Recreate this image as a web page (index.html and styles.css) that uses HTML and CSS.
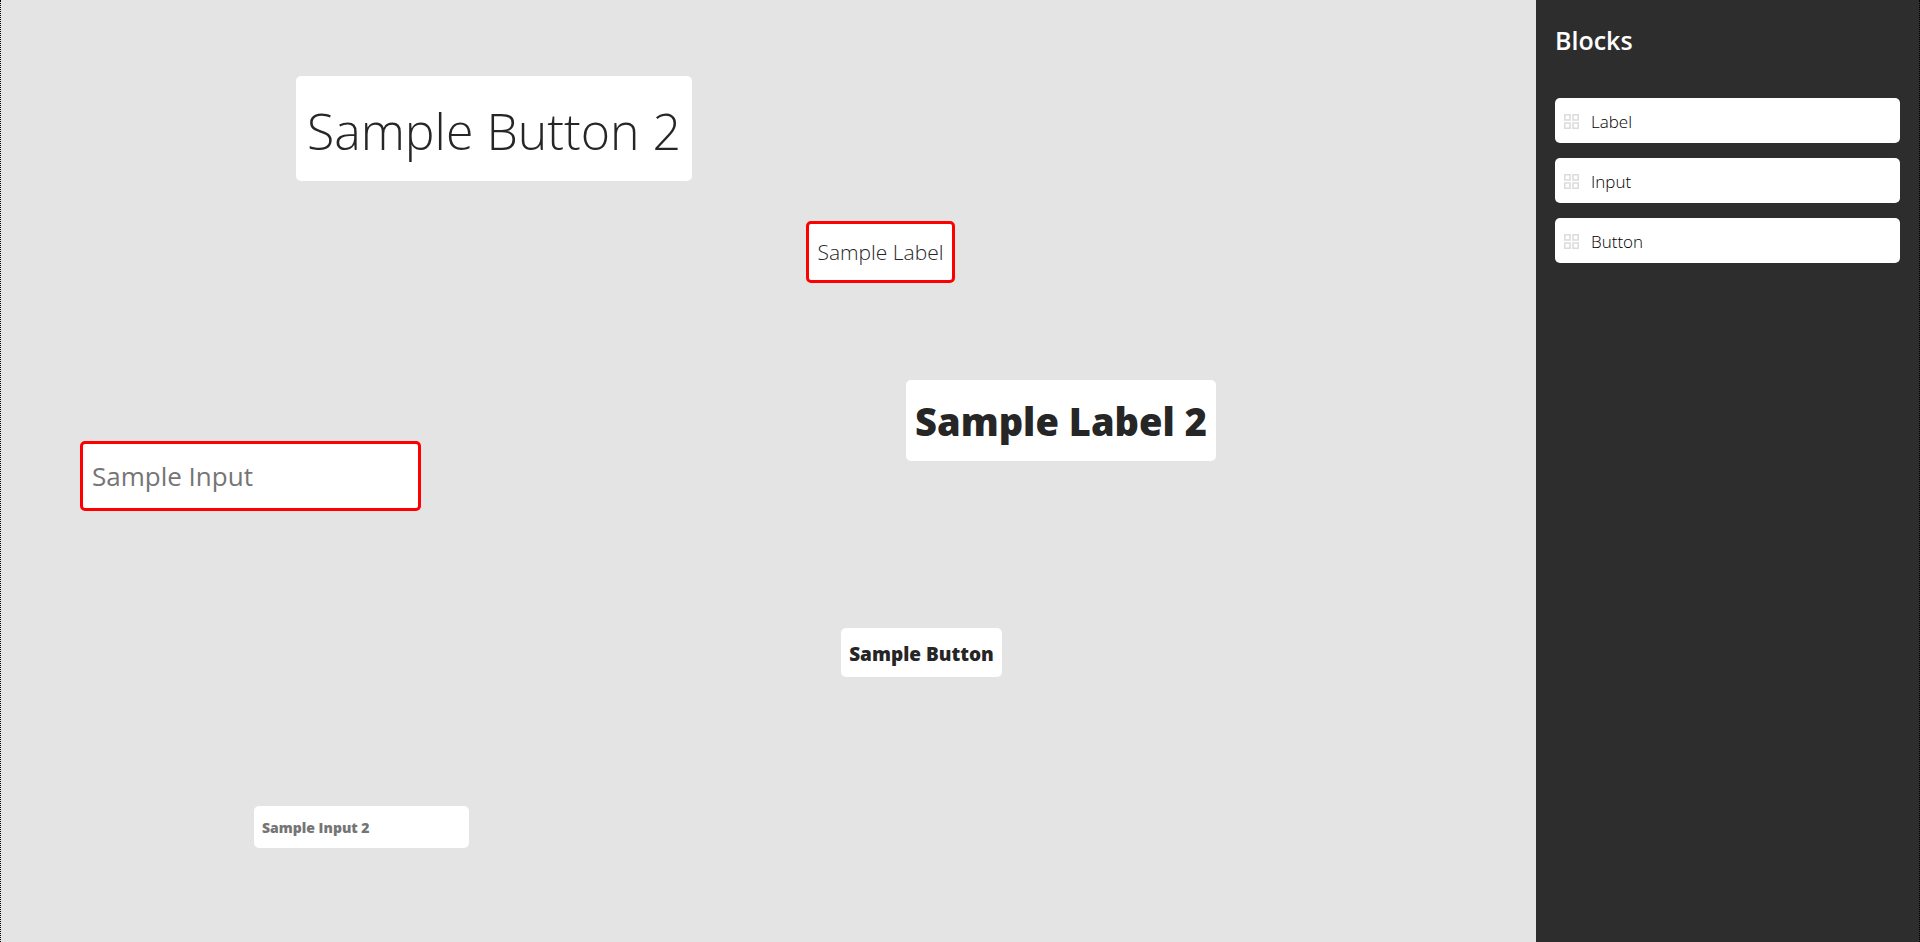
FILE: index.html
```html
<!DOCTYPE html>
<html lang="en">
<head>
<meta charset="utf-8">
<title>Blocks</title>
<link rel="stylesheet" href="styles.css">
</head>
<body>
<svg class="sprite" aria-hidden="true">
  <symbol id="grip" viewBox="0 0 15 15">
    <path fill="none" stroke="currentColor" stroke-width="1.6" d="M.8.8h5.2v5.2H.8zM9 .8h5.2v5.2H9zM.8 9h5.2v5.2H.8zM9 9h5.2v5.2H9z"/>
  </symbol>
</svg>
<div class="app">
  <main class="canvas">
    <button class="node button-two" type="button">Sample Button 2</button>
    <label class="node label-one selected" for="input-one">Sample Label</label>
    <label class="node label-two" for="input-two">Sample Label 2</label>
    <input class="node input-one selected" id="input-one" type="text" placeholder="Sample Input">
    <button class="node button-one" type="button">Sample Button</button>
    <input class="node input-two" id="input-two" type="text" placeholder="Sample Input 2">
  </main>
  <aside class="sidebar">
    <h1 class="title">Blocks</h1>
    <div class="blocks">
      <button class="block" type="button"><svg class="grip" aria-hidden="true"><use href="#grip"/></svg>Label</button>
      <button class="block" type="button"><svg class="grip" aria-hidden="true"><use href="#grip"/></svg>Input</button>
      <button class="block" type="button"><svg class="grip" aria-hidden="true"><use href="#grip"/></svg>Button</button>
    </div>
  </aside>
</div>
</body>
</html>
```
FILE: styles.css
```css
* { box-sizing: border-box; }
body { margin: 0; font-family: "Open Sans", "Noto Sans", sans-serif; color: #262626; }
button, input { font-family: inherit; color: inherit; }
.sprite { position: absolute; width: 0; height: 0; }
.app {
  display: grid;
  grid-template-columns: 4fr 1fr;
  min-height: 100vh;
}
.canvas { position: relative; background: #e4e4e4; border-left: 1px dotted #000; }

/* Blocks placed freely on the canvas */
.node {
  position: absolute;
  display: flex;
  align-items: center;
  justify-content: center;
  padding: 0 8px;
  border: 0;
  border-radius: 5px;
  background: #fff;
  white-space: nowrap;
}
.selected { border: 3px solid #f00; }
.node::placeholder { color: #757575; opacity: 1; }
.button-two { left: 295px; top: 76px; min-width: 396px; height: 105px; padding-top: 4px; font-size: 50px; font-weight: 300; }
.label-one { left: 805px; top: 221px; min-width: 149px; height: 62px; font-size: 21px; font-weight: 300; }
.label-two { left: 905px; top: 380px; min-width: 310px; height: 81px; font-size: 38px; font-weight: 800; }
.input-one { left: 79px; top: 441px; width: 341px; height: 70px; padding: 0 9px; font-size: 26px; }
.button-one { left: 840px; top: 628px; min-width: 161px; height: 49px; padding-top: 2px; font-size: 19px; font-weight: 800; }
.input-two { left: 253px; top: 806px; width: 215px; height: 42px; font-size: 14px; font-weight: 800; }

.sidebar { padding: 18px 19px 0; background: #2d2d2d; border-right: 1px dotted #000; }
.title { margin: 0 0 36px; font-size: 25px; line-height: 44px; font-weight: 600; color: #fff; }
.blocks { display: flex; flex-direction: column; gap: 15px; }
.block {
  display: flex;
  align-items: center;
  gap: 12px;
  height: 45px;
  padding: 1px 9px 0;
  border: 0;
  border-radius: 5px;
  background: #fff;
  color: #000;
  font-size: 17px;
  font-weight: 300;
}
.grip { width: 15px; height: 15px; color: #dcdcdc; }
```
